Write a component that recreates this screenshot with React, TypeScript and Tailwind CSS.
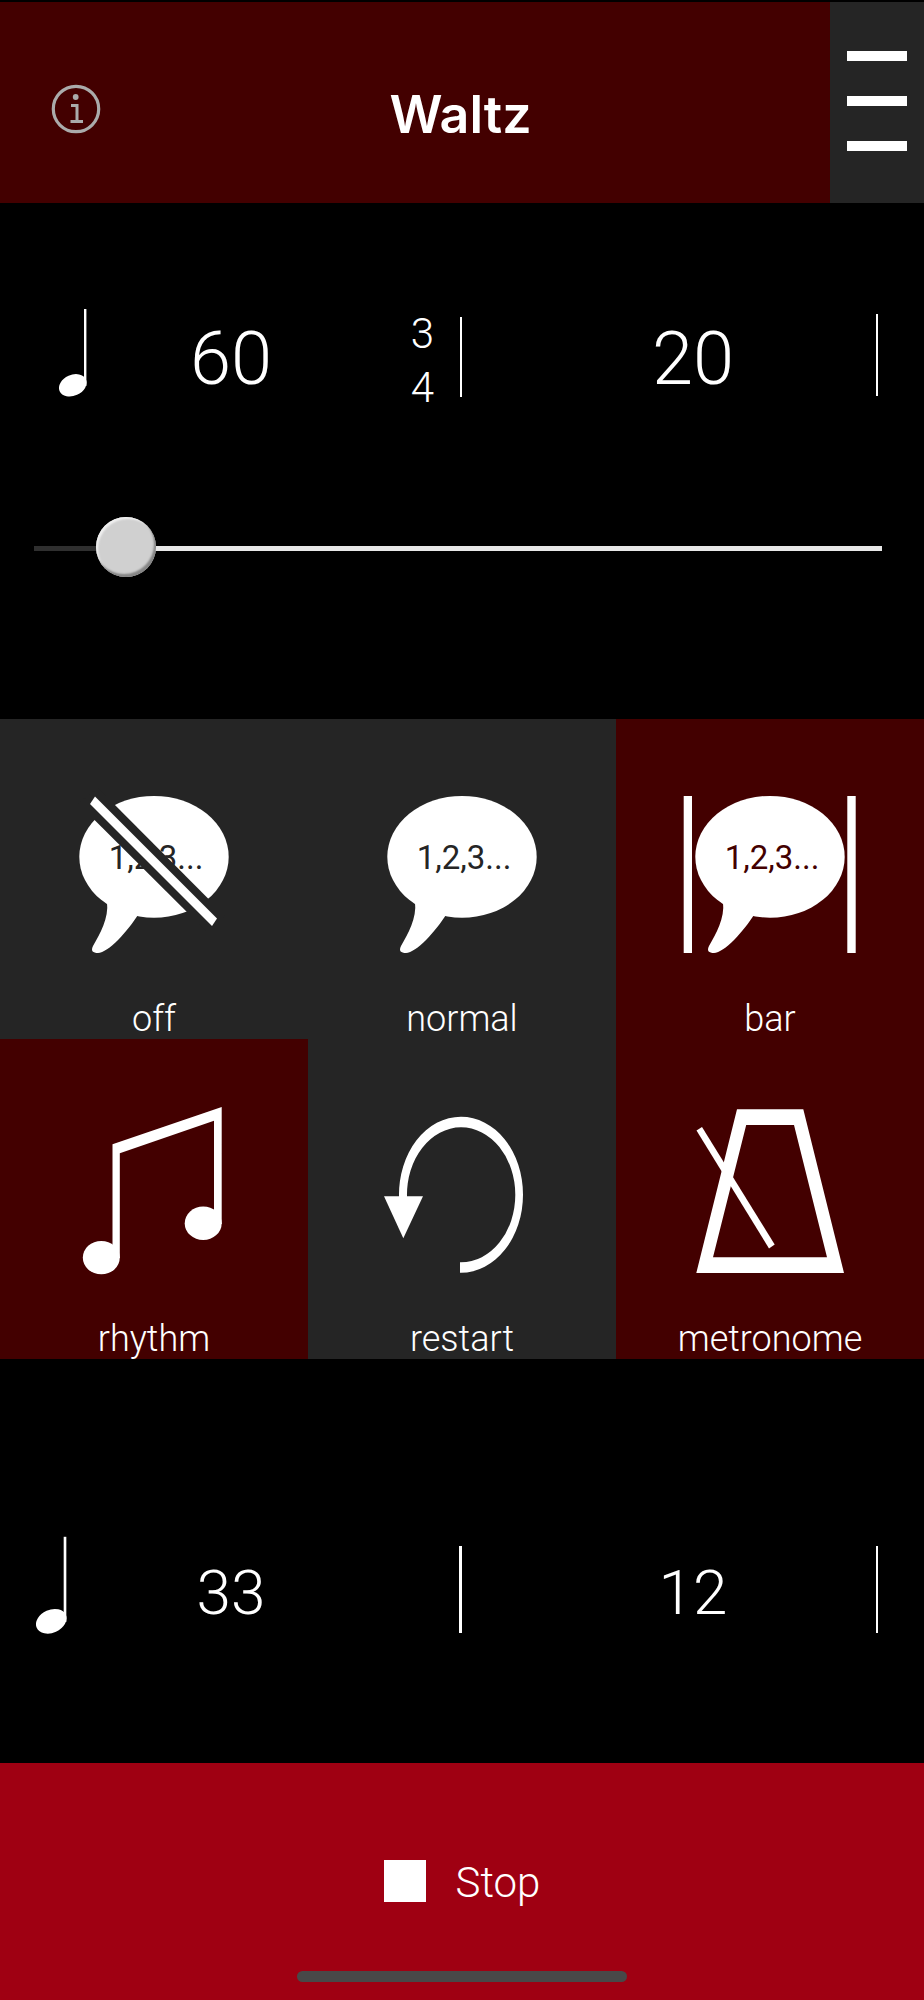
import { useState } from "react";
import type { CSSProperties, ReactNode } from "react";

const MIN_BPM = 40;
const MAX_BPM = 294;

function QuarterNote({ className }: { className: string }) {
  return (
    <svg viewBox="0 0 28 88" fill="white" className={className} aria-hidden="true">
      <path d="M25 0H27.4V77H25Z" />
      <ellipse cx="13.8" cy="76.3" rx="14.4" ry="10.4" transform="rotate(-24 13.8 76.3)" />
    </svg>
  );
}

function TileIcon({ children }: { children: ReactNode }) {
  return (
    <svg viewBox="60 64 188 174" fill="white" className="h-[174px] w-[188px]" aria-hidden="true">
      {children}
    </svg>
  );
}

function Bubble({ textClass }: { textClass: string }) {
  return (
    <>
      <ellipse cx="154" cy="137.8" rx="74.7" ry="60.9" />
      <path d="M107 183C109 199 100 215 93 227C90.5 232 93 234 98 234C108 234 128 212 138.5 195Z" />
      <text
        x="156"
        y="150"
        textAnchor="middle"
        className={`font-['Roboto',sans-serif] text-[33px] font-normal ${textClass}`}
      >
        1,2,3...
      </text>
    </>
  );
}

function CountOffIcon() {
  return (
    <TileIcon>
      <Bubble textClass="fill-[#252525]" />
      <path className="fill-[#252525]" d="M98 69L225 196.5L206 212L78 84.5Z" />
      <path d="M95 77.5L217 199.5L212 207L90 85Z" />
    </TileIcon>
  );
}

function CountNormalIcon() {
  return (
    <TileIcon>
      <Bubble textClass="fill-[#252525]" />
    </TileIcon>
  );
}

function CountBarIcon() {
  return (
    <TileIcon>
      <Bubble textClass="fill-[#430000]" />
      <path d="M67.7 77H76V234H67.7ZM231.3 77H239.7V234H231.3Z" />
    </TileIcon>
  );
}

function RhythmIcon() {
  return (
    <TileIcon>
      <path d="M112.5 218V105.3L221.7 68V185H214V81.7L119.8 114.3V219H112.5Z" />
      <ellipse cx="101.3" cy="218.6" rx="18.5" ry="16.7" />
      <ellipse cx="203.2" cy="184.3" rx="18.5" ry="16.7" />
    </TileIcon>
  );
}

function RestartIcon() {
  return (
    <TileIcon>
      <path d="M91 158A62 78 0 0 1 153 77.7A62 78 0 0 1 153 233.7H152V223.3H153A54.3 67.5 0 0 0 153 88.3A54.3 67.5 0 0 0 99 158Z" />
      <path d="M76 157.3H115L95.3 199.3Z" />
    </TileIcon>
  );
}

function MetronomeIcon() {
  return (
    <TileIcon>
      <path
        fillRule="evenodd"
        d="M121 70.3H187.3L228 234H80.3ZM130.2 86L97 218.3H211L178 86Z"
      />
      <path d="M86 88L158.7 205.5L153 209.5L80.5 91.5Z" />
    </TileIcon>
  );
}

const tiles = [
  { label: "off", Icon: CountOffIcon, active: false },
  { label: "normal", Icon: CountNormalIcon, active: false },
  { label: "bar", Icon: CountBarIcon, active: true },
  { label: "rhythm", Icon: RhythmIcon, active: true },
  { label: "restart", Icon: RestartIcon, active: false },
  { label: "metronome", Icon: MetronomeIcon, active: true },
];

function Header() {
  return (
    <header className="mt-0.5 flex h-[201px] bg-[#430000]">
      <div className="grid flex-1 grid-cols-[1fr_auto_1fr] items-center pl-[51px]">
        <button type="button" aria-label="Info" className="justify-self-start pt-3">
          <svg viewBox="0 0 50 50" className="size-[50px]" fill="none" stroke="#ababab" aria-hidden="true">
            <circle cx="25" cy="25" r="22.7" strokeWidth="3.2" />
            <circle cx="24.7" cy="13" r="2.9" fill="#ababab" stroke="none" />
            <path d="M20 21.5H26V37.5M19.5 37.5H32" strokeWidth="3" />
          </svg>
        </button>
        <h1 className="pt-6 pl-10 font-['Inter',sans-serif] text-[52px] leading-[60px] font-semibold text-white">
          Waltz
        </h1>
      </div>
      <button
        type="button"
        aria-label="Menu"
        className="flex w-[94px] flex-col items-center gap-[35px] bg-[#252525] pt-[49px]"
      >
        <span className="h-[10px] w-[60px] bg-white" />
        <span className="h-[10px] w-[60px] bg-white" />
        <span className="h-[10px] w-[60px] bg-white" />
      </button>
    </header>
  );
}

function TempoPanel() {
  const [bpm, setBpm] = useState(60);
  const fill = ((bpm - MIN_BPM) / (MAX_BPM - MIN_BPM)) * 100;

  return (
    <section className="pt-[100px] pb-[141px]">
      <div className="grid grid-cols-2">
        <div className="grid grid-cols-[1fr_auto_1fr] items-center">
          <QuarterNote className="mb-3 ml-[59px] h-[88px] w-7" />
          <span className="text-[74px] leading-[100px]">60</span>
          <div className="flex items-center justify-end gap-[26px]">
            <div className="flex flex-col pt-1 text-[42px] leading-[54px]">
              <span>3</span>
              <span>4</span>
            </div>
            <span className="mb-1 h-20 w-0.5 bg-white" />
          </div>
        </div>
        <div className="grid grid-cols-[1fr_auto_1fr] items-center">
          <span />
          <span className="text-[74px] leading-[100px]">20</span>
          <span className="mr-[46px] mb-2 h-[82px] w-0.5 justify-self-end bg-white" />
        </div>
      </div>
      <div className="mt-[103px] pr-[42px] pl-[34px]">
        <input
          type="range"
          aria-label="Tempo"
          min={MIN_BPM}
          max={MAX_BPM}
          value={bpm}
          onChange={(e) => setBpm(Number(e.target.value))}
          style={{ "--fill": `${fill}%` } as CSSProperties}
          className="block h-[60px] w-full appearance-none bg-transparent [&::-webkit-slider-runnable-track]:h-[5px] [&::-webkit-slider-runnable-track]:bg-[linear-gradient(to_right,#2f2f2f_calc(var(--fill)+3%),#e8e8e8_calc(var(--fill)+3%))] [&::-webkit-slider-thumb]:-mt-[29px] [&::-webkit-slider-thumb]:size-[60px] [&::-webkit-slider-thumb]:appearance-none [&::-webkit-slider-thumb]:rounded-full [&::-webkit-slider-thumb]:bg-[#d0d0d0] [&::-webkit-slider-thumb]:shadow-[inset_-2px_-3px_2px_#858585,inset_2px_2px_2px_#f0f0f0]"
        />
      </div>
    </section>
  );
}

function ModeGrid() {
  return (
    <section className="grid grid-cols-3">
      {tiles.map(({ label, Icon, active }) => (
        <button
          key={label}
          type="button"
          aria-pressed={active}
          className={`flex flex-col items-center pt-16 ${active ? "bg-[#430000]" : "bg-[#252525]"}`}
        >
          <Icon />
          <span className="mt-[42px] text-[36px] leading-[40px]">{label}</span>
        </button>
      ))}
    </section>
  );
}

function PositionPanel() {
  return (
    <section className="grid grid-cols-2 pt-[177px] pb-[120px]">
      <div className="grid grid-cols-[1fr_auto_1fr] items-center">
        <QuarterNote className="mb-2 ml-9 h-[99px] w-[31px]" />
        <span className="pt-1.5 text-[62px] leading-[100px]">33</span>
        <span className="h-[87px] w-[3px] justify-self-end bg-white" />
      </div>
      <div className="grid grid-cols-[1fr_auto_1fr] items-center">
        <span />
        <span className="pt-1.5 text-[62px] leading-[100px]">12</span>
        <span className="mr-[46px] h-[87px] w-0.5 justify-self-end bg-white" />
      </div>
    </section>
  );
}

export default function App() {
  return (
    <main className="flex min-h-screen flex-col overflow-hidden bg-black font-['Roboto',sans-serif] font-light text-white">
      <Header />
      <TempoPanel />
      <ModeGrid />
      <PositionPanel />
      <footer className="flex flex-1 flex-col items-center bg-[#9f0012]">
        <button type="button" className="flex w-full items-center justify-center gap-[30px] pt-[88px] pb-[60px]">
          <span className="size-[42px] bg-white" />
          <span className="pt-1 text-[42px] leading-[56px]">Stop</span>
        </button>
        <span className="h-[11px] w-[330px] rounded-full bg-[#484848]" />
      </footer>
    </main>
  );
}
